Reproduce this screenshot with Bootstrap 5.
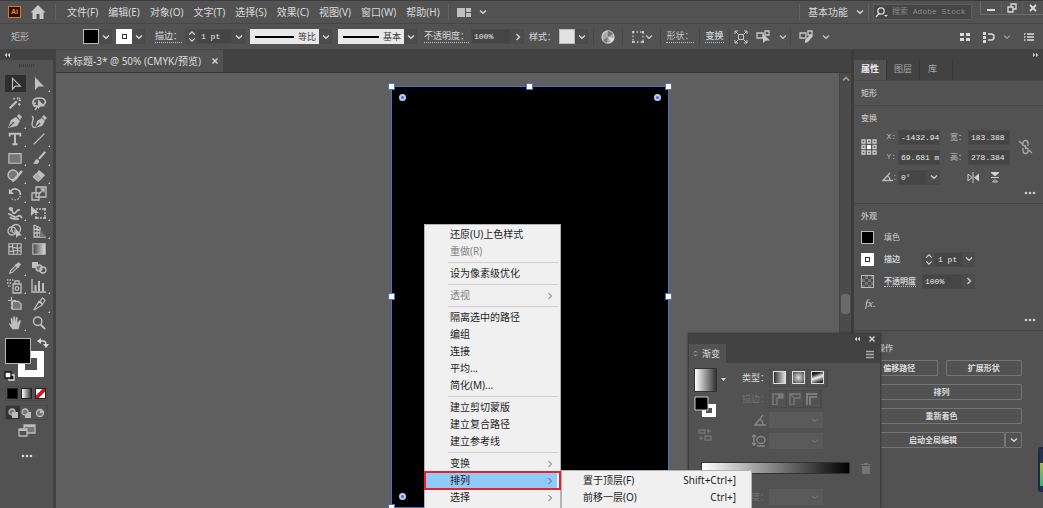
<!DOCTYPE html>
<html lang="zh-CN">
<head>
<meta charset="utf-8">
<meta name="viewport" content="width=device-width, initial-scale=1">
<title>未标题-3</title>
<link href="https://cdn.jsdelivr.net/npm/bootstrap@5.3.0/dist/css/bootstrap.min.css" rel="stylesheet">
<style>
:root{--panel:#525252;--dark:#424242;--field:#454545;--line:#474747;--ink:#dadada;--blue:#4f6fc4}
html,body{height:100%}
body{margin:0;background:var(--panel);color:var(--ink);font:10px/14px "Noto Sans","Noto Sans CJK SC",sans-serif;overflow:hidden}
button,input,select{font:inherit;color:inherit;border:0;padding:0;margin:0;background:transparent;border-radius:0}
a{color:inherit;text-decoration:none}
svg{display:block;fill:none;stroke:currentColor;stroke-width:1.3;flex:none}
.i8{width:8px;height:8px}.i12{width:12px;height:12px}.i14{width:14px;height:14px}.i16{width:16px;height:16px}.i18{width:18px;height:18px}
.solid{fill:currentColor;stroke:none}
.mono{font-family:"Liberation Mono","Noto Sans CJK SC",monospace;font-size:8px;line-height:12px}
/* application bar */
.appbar{height:24px;border-bottom:1px solid #464646;border-top:1px solid #3c3c3c}
.vline{width:1px;height:16px;background:#626262}
.brand{width:13px;height:12px;background:#2a1005;border:1px solid #d67a1c;color:#f08a1c;font:bold 7px/10px "Liberation Sans",sans-serif;text-align:center}
.menus{gap:10px;padding-left:3px}
.finder{width:99px;height:16px;background:var(--field);border:1px solid #5e5e5e}
.finder input{width:76px;color:#8a8a8a}
.finder input::placeholder{color:#8a8a8a;opacity:1}
.winbtns{width:63px;height:14px;border:1px solid #6a6a6a;border-top:0;border-right:0}
.winbtns button{flex:1;display:flex;justify-content:center;align-items:center}
.winbtns button+button{border-left:1px solid #5f5f5f}
/* control bar */
.ctrlbar{display:grid;grid-template-columns:83px 33px 39px 30px 65px 88px 86px 47px 58px 30px 34px 29px 38px 39px 30px 61px 1fr auto;height:26px;align-items:center;border-bottom:1px solid #464646;font-size:9px}
.ctrlbar>*{display:flex;align-items:center;min-width:0;white-space:nowrap}
.ctrlbar>.cut{border-left:1px solid #474747;height:18px;justify-content:center;color:#c6c6c6}
.under{border-bottom:1px dotted #bdbdbd;line-height:12px}
.chip{width:16px;height:15px;border:1px solid #bcbcbc;flex:none}
.chip.hole{background:#fff;border-color:#fff;display:flex;align-items:center;justify-content:center}
.chip.hole::after{content:"";width:5px;height:5px;border:1px solid #333}
.drop{width:13px;height:15px;border:1px solid #4a4a4a;display:flex;align-items:center;justify-content:center;background:#4c4c4c;flex:none}
.boxed{background:var(--field);border:1px solid #4a4a4a;height:15px;padding-left:2px;color:#e8e8e8}
.stroke-pick{height:15px;background:#e8e8e8;color:#3a3a3a;display:flex;align-items:center;gap:4px;padding:0 3px 0 5px;font-size:9px}
.stroke-pick::before{content:"";flex:1;height:2px;background:#000}
/* tool column */
.tools{width:53px;background:var(--panel)}
.strip{height:10px;background:var(--dark);display:flex;align-items:center;flex:none}
.grip{width:16px;height:3px;background:repeating-linear-gradient(90deg,#3c3c3c 0 1px,transparent 1px 2px)}
.toolgrid{display:grid;grid-template-columns:24px 24px;grid-template-rows:repeat(14,1fr);height:257px;margin:8px 0 0 3px}
.toolgrid button{display:flex;align-items:center;justify-content:center;position:relative;color:#c0c0c0}
.toolgrid .on{background:#2e2e2e;margin:0 1px 1px 2px;border-radius:1px}
.toolgrid .more::after{content:"";position:absolute;right:1px;bottom:1px;border:1px solid #c4c4c4;border-left-color:transparent;border-top-color:transparent}
.fillzone{height:45px;position:relative;margin-top:5px}
.sw-stroke{position:absolute;left:18px;top:14px;width:26px;height:26px;border:7px solid #fff;background:var(--panel)}
.sw-fill{position:absolute;left:5px;top:1px;width:26px;height:26px;background:#000;border:1px solid #b8b8b8}
.triple{display:grid;grid-template-columns:repeat(3,1fr);margin:0 5px;height:15px;border:1px solid #4a4a4a}
.triple>button{display:flex;align-items:center;justify-content:center;color:#bbb}
.mini{width:11px;height:11px;border:1px solid #222}
/* document */
.gutter{background:var(--dark)}
.tabstrip{height:23px;background:var(--dark);border-bottom:1px solid #383838}
.doctab{width:167px;background:var(--panel);padding:0 4px 0 7px}
.canvas{background:#5f5f5f;position:relative;overflow:hidden}
.art{position:absolute;left:335px;top:13px;width:278px;bottom:0;background:#000;border:1px solid var(--blue)}
.hnd{position:absolute;width:5px;height:5px;background:#fff;outline:1px solid var(--blue)}
.rnd{position:absolute;width:7px;height:7px;border:2px solid #b8ccff;border-radius:50%;background:#5470b8}
.vscroll{width:12px;background:#4b4b4b;position:relative;border-left:1px solid #444;padding-top:2px;color:#a8a8a8}
.thumb{position:absolute;left:1px;top:221px;width:9px;height:20px;border-radius:4px;background:#6b6b6b}
/* properties */
.props{width:189px;background:var(--panel);font-size:8px;line-height:12px;color:#cecece}
.ptabs{height:21px;background:var(--dark);border-bottom:1px solid #4a4a4a;font-size:9px}
.ptabs a{padding:3px 7px 0;border-right:1px solid #383838;color:#a8a8a8}
.ptabs a.active{background:var(--panel);color:#f0f0f0;font-weight:bold}
.ptabs a:last-child{padding-right:15px;padding-left:8px}
.sect{border-bottom:1px solid #454545;padding:0 7px;position:relative}
.sect h2{font-size:8px;line-height:12px;margin:0;font-weight:500;color:#c4c4c4}
.tgrid{display:grid;grid-template-columns:22px 15px 42px 28px 42px 1fr;grid-auto-rows:20px;align-items:center}
.tgrid label{text-align:right;padding-right:2px;color:#bbb;white-space:nowrap}
.flips{grid-column:4/7;padding-left:26px}
.arow{height:22px;display:grid;grid-template-columns:23px 38px 1fr;align-items:center}
.act{height:16px;border:1px solid #757575;border-radius:1px;flex:1;font-weight:bold;line-height:12px;color:#dcdcdc}
/* floating gradient panel */
.gpanel{position:absolute;left:688px;top:333px;width:193px;bottom:0;background:var(--panel);border:1px solid #3e3e3e;border-bottom:0;overflow:hidden;box-shadow:0 0 2px #333}
.grow{display:grid;grid-template-columns:75px 1fr;height:21px;align-items:center;margin-left:5px}
.grow>:first-child{justify-self:end;font-size:9px}
.grow svg{margin-right:3px}
.gset svg{margin:0}
.gfield{width:54px;height:16px;background:#5a5a5a;color:#6a6a6a;-webkit-appearance:none;appearance:none;background-image:url("data:image/svg+xml,%3Csvg xmlns='http://www.w3.org/2000/svg' viewBox='0 0 8 8'%3E%3Cpath d='M1 3l3 2 3-2' fill='none' stroke='%23777'/%3E%3C/svg%3E");background-size:8px;background-repeat:no-repeat;background-position:right 4px center;opacity:1}
.gset{display:flex;width:max-content;border:1px solid #494949}
.gset button{width:19px;height:16px;display:flex;align-items:center;justify-content:center;border-right:1px solid #494949}
.gset button:disabled{width:17px}
.gleft{position:absolute;left:5px;top:34px;width:32px}
.ramp{height:12px;width:149px;background:linear-gradient(90deg,#fff,#000);border:1px solid #333}
.gi{width:13px;height:13px;border:1px solid #ddd}
/* pop-up menus */
.pop{position:absolute;background:#f0f0f0;color:#1c1c1c;border:1px solid #b4b4b4;border-bottom:0;padding-top:1px}
.pop button{display:flex;justify-content:space-between;align-items:center;width:100%;height:17px;padding:0 6px 0 25px;line-height:17px}
.pop button:disabled{color:#858585}
.pop svg{stroke-width:1;color:#666}
.pop hr{margin:2px 2px 2px 23px;border:0;border-top:1px solid #d0d0d0;opacity:1}
.ctx{left:424px;top:224px;width:137px;height:300px}
.ctx .sel{background:linear-gradient(90deg,#91c9f7 132px,#f0f0f0 132px);outline:2px solid #e8202a;outline-offset:-1px;position:relative;z-index:2}
.sub{left:561px;top:470px;width:191px;height:60px}
.sub button{padding:0 15px 0 21px}
.meter{position:absolute;right:0;top:447px;width:5px;height:45px;background:linear-gradient(#26324a 35%,#a8b84a 35%,#46a888 90%,#26324a 90%);border:1px solid #1f2a48;border-width:2px 0 2px 2px;border-radius:3px 0 0 3px}
</style>
</head>
<body class="position-relative">
<svg class="d-none">
<symbol id="chev" viewBox="0 0 8 8"><path d="M1 2.5 4 5.3 7 2.5"/></symbol>
<symbol id="next" viewBox="0 0 8 8"><path d="M2.5 1 5.5 4 2.5 7"/></symbol>
<symbol id="updn" viewBox="0 0 10 14"><path d="M2 5 5 2 8 5M2 9 5 12 8 9"/></symbol>
<symbol id="dbl" viewBox="0 0 8 8"><path d="M4 1 1 4 4 7zM8 1 5 4 8 7z" class="solid"/></symbol>
<symbol id="x" viewBox="0 0 8 8"><path d="M1.5 1.5l5 5M6.5 1.5l-5 5"/></symbol>
<symbol id="dots" viewBox="0 0 12 4"><g class="solid"><circle cx="2" cy="2" r="1.3"/><circle cx="6" cy="2" r="1.3"/><circle cx="10" cy="2" r="1.3"/></g></symbol>
<symbol id="list" viewBox="0 0 12 12"><path d="M4 3h7M4 6h7M4 9h7M1 3h1.5M1 6h1.5M1 9h1.5"/></symbol>
</svg>

<div class="d-flex flex-column h-100">
<header class="appbar d-flex align-items-center flex-shrink-0">
 <div class="brand ms-2 me-2">Ai</div>
 <svg class="i18 solid me-2" viewBox="0 0 18 18"><path d="M9 2 1.5 9.5h2V16h4v-5h3v5h4V9.500h2z" fill="#c8c8c8"/></svg>
 <i class="vline me-2"></i>
 <nav class="menus d-flex text-nowrap" aria-label="主菜单">
  <a href="#">文件(F)</a><a href="#">编辑(E)</a><a href="#">对象(O)</a><a href="#">文字(T)</a><a href="#">选择(S)</a><a href="#">效果(C)</a><a href="#">视图(V)</a><a href="#">窗口(W)</a><a href="#">帮助(H)</a>
 </nav>
 <i class="vline mx-2"></i>
 <button class="d-flex align-items-center gap-2" aria-label="排列文档"><svg class="i14 solid" viewBox="0 0 14 14"><path fill="#c0c0c0" d="M0 3h8v9H0zM9 3h5v4H9zM9 8h5v4H9z"/></svg><svg class="i8"><use href="#chev"/></svg></button>
 <i class="vline ms-auto me-2"></i>
 <button class="d-flex align-items-center gap-2 me-1">基本功能 <svg class="i8"><use href="#chev"/></svg></button>
 <i class="vline me-1"></i>
 <div class="finder d-flex align-items-center gap-1 me-2"><svg class="i14" viewBox="0 0 14 14"><circle cx="7" cy="6" r="3.200"/><path d="M5 8.500 2 12"/><path d="M10 10h4l-2 2z" class="solid"/></svg><input class="mono" aria-label="搜索" placeholder="搜索 Adobe Stock"></div>
 <div class="winbtns d-flex align-self-start">
  <button aria-label="最小化"><svg class="i12" viewBox="0 0 12 12"><path d="M2 8h8" stroke-width="2"/></svg></button>
  <button aria-label="还原"><svg class="i12" viewBox="0 0 12 12"><path d="M2 5h5v5H2zM5 5V2h5v5H7"/></svg></button>
  <button aria-label="关闭"><svg class="i12" viewBox="0 0 12 12"><path d="M3 3l6 6M9 3 3 9" stroke-width="1.800"/></svg></button>
 </div>
</header>

<div class="ctrlbar flex-shrink-0">
 <span style="padding-left:11px;color:#bbb">矩形</span>
 <div><button class="chip bg-black" aria-label="填色"></button><button class="drop" aria-label="填色选项"><svg class="i8"><use href="#chev"/></svg></button></div>
 <div><button class="chip hole" aria-label="描边颜色"></button><button class="drop" aria-label="描边选项"><svg class="i8"><use href="#chev"/></svg></button></div>
 <label for="sw"><span class="under">描边：</span></label>
 <div><button class="drop" aria-label="微调"><svg width="10" height="13"><use href="#updn"/></svg></button><input id="sw" class="boxed mono" size="1" style="width:34px" value="1 pt"><button class="drop" aria-label="粗细"><svg class="i8"><use href="#chev"/></svg></button></div>
 <div><button class="stroke-pick" style="width:69px">等比</button><button class="drop" aria-label="变量宽度"><svg class="i8"><use href="#chev"/></svg></button></div>
 <div><button class="stroke-pick" style="width:66px">基本</button><button class="drop" aria-label="画笔"><svg class="i8"><use href="#chev"/></svg></button></div>
 <label for="op"><span class="under">不透明度：</span></label>
 <div><input id="op" class="boxed mono" style="width:40px" value="100%"><button class="drop" aria-label="不透明度选项"><svg class="i8"><use href="#next"/></svg></button></div>
 <span>样式：</span>
 <div><button class="chip" style="background:#e2e2e2" aria-label="图形样式"></button><button class="drop" aria-label="样式选项"><svg class="i8"><use href="#chev"/></svg></button></div>
 <button class="cut" aria-label="重新着色"><svg class="i14" viewBox="0 0 14 14"><circle cx="7" cy="7" r="6" fill="#aaa" stroke="#ccc"/><path d="M7 7V1a6 6 0 0 1 5 3zM7 7 2 10a6 6 0 0 0 4 3z" fill="#777" stroke="none"/><path d="M7 7 13 8a6 6 0 0 1-3 4z" fill="#ddd" stroke="none"/></svg></button>
 <button class="cut" aria-label="对齐"><svg class="i14" viewBox="0 0 14 14"><path d="M2 2h10v10H2z" stroke-dasharray="1.500 2"/><path d="M1 1h2v2H1zM11 1h2v2h-2zM1 11h2v2H1zM11 11h2v2h-2z" class="solid"/></svg><svg class="i8"><use href="#chev"/></svg></button>
 <a class="cut" href="#"><span class="under">形状：</span></a>
 <a class="cut" href="#"><span class="under fw-bold">变换</span></a>
 <div class="cut gap-2"><svg class="i14" viewBox="0 0 14 14"><path d="M4.500 4.500h5v5h-5zM1 1l3 3M13 1l-3 3M1 13l3-3M13 13l-3-3M1 4V1h3M10 1h3v3M1 10v3h3M10 13h3v-3" stroke-width="1"/></svg><svg width="15" height="14" viewBox="0 0 15 14"><path d="M1 3h6v5H1zM9 1h4v4H9z"/><path d="M7 4v9l3-2.500h4z" class="solid"/></svg><svg class="i8"><use href="#chev"/></svg></div>
 <div class="cut gap-2 justify-content-start ps-2"><svg width="15" height="14" viewBox="0 0 15 14"><path d="M1 3h6v5H1zM9 1h4v4H9z"/><path d="M12 4 6 10v3l3-1 5-6z" class="solid"/></svg><svg class="i8"><use href="#chev"/></svg></div>
 <div class="gap-2 me-2"><svg class="i12 solid" viewBox="0 0 12 12"><path d="M1 2h4v3H1zM7 2h4v3H7zM1 7h4v3H1zM7 7h4v3H7z"/></svg><svg class="i12 ms-1" viewBox="0 0 12 12"><path d="M0 1h3v3H0zM0 5h3v3H0zM0 9h3v3H0z" class="solid"/><path d="M5 3h3a3 3 0 0 1 0 6H5" stroke-width="1.500"/></svg><svg class="i8 opacity-50"><use href="#chev"/></svg><svg class="i12 ms-1"><use href="#list"/></svg></div>
</div>

<main class="d-flex flex-grow-1" style="min-height:0">
 <aside class="tools d-flex flex-column flex-shrink-0">
  <div class="strip ps-1"><svg width="6" height="6"><use href="#dbl"/></svg></div>
  <div class="grip mx-auto mt-1 mb-0"></div>
  <div class="toolgrid">
   <button class="on" aria-label="选择"><svg class="i14" viewBox="0 0 16 16"><path d="M4 1.500v12.500l3.200-3.500h5.800z"/></svg></button>
   <button class="more" aria-label="直接选择"><svg class="i16 solid" viewBox="0 0 16 16"><path d="M4 1v13l3.500-3.500h5.500z"/></svg></button>
   <button aria-label="魔棒"><svg class="i14" viewBox="0 0 16 16"><path d="M2 14 10 6" stroke-width="2.400"/><path d="M11 1v3M15 5h-3M14 2l-1.500 1.500M7 2v2M6 3h2M13 8v3M11.500 9.500h3"/></svg></button>
   <button aria-label="套索"><svg class="i16" viewBox="0 0 16 16"><path d="M5 11C0 10 1 3 8 3s8 5 4 7M5 8c-3 0-3 4 0 3s0 3-1 4" stroke-width="1.600"/><path d="M7 4v10l2.500-2.500H14z" class="solid"/></svg></button>
   <button class="more" aria-label="钢笔"><svg class="i16" viewBox="0 0 16 16"><path d="M1 15 4 7l5-3 4 4-3 5zM10 3l2-2 3 3-2 3z" class="solid"/><path d="M2 14l5-5" stroke="#525252"/></svg></button>
   <button aria-label="曲率"><svg class="i16" viewBox="0 0 16 16"><path d="M4 15 6 8l5-3 3 3-3 5zM11 4l2-2 3 3-2 2z" class="solid"/><path d="M1 3c3 2 0 5 0 8s2 4 4 3"/><path d="M5 14l4-4" stroke="#525252"/></svg></button>
   <button class="more" aria-label="文字"><svg class="i14" viewBox="0 0 16 16"><path d="M2 5V2h12v3M8 2v12M5 14h6" stroke-width="2.200"/></svg></button>
   <button class="more" aria-label="直线"><svg class="i14" viewBox="0 0 16 16"><path d="M2 14 14 2"/></svg></button>
   <button class="more" aria-label="矩形"><svg class="i14" viewBox="0 0 16 16"><path d="M1 3h14v11H1z" fill="#777"/></svg></button>
   <button class="more" aria-label="画笔"><svg class="i14" viewBox="0 0 16 16"><path d="M6 9c-3 0-2 4-5 5 4 2 8 0 7-3z" class="solid"/><path d="M15 1 8 9" stroke-width="2.600"/></svg></button>
   <button class="more" aria-label="斑点画笔"><svg class="i16" viewBox="0 0 16 16"><circle cx="6" cy="7" r="5" fill="#777"/><path d="M15 3 7 12l-2 1" stroke-width="2.600"/></svg></button>
   <button class="more" aria-label="橡皮擦"><svg class="i14" viewBox="0 0 16 16"><path d="M8 1 15 7l-4 4-6-6z" class="solid"/><path d="M5 5 1.500 9 7 14l4-3.500" fill="#aaa"/></svg></button>
   <button class="more" aria-label="旋转"><svg class="i14" viewBox="0 0 16 16"><path d="M3 5a6 6 0 0 1 11 4" stroke-width="1.800"/><path d="M14 10a6 6 0 0 1-11 2" stroke-dasharray="2 1.500"/><path d="M1 2v6h6z" class="solid"/></svg></button>
   <button class="more" aria-label="缩放"><svg class="i16" viewBox="0 0 16 16"><path d="M5 1h10v10H5zM1 7h7v7H1zM8 8l5-5M9.500 3H13v3.500"/></svg></button>
   <button class="more" aria-label="宽度"><svg class="i16" viewBox="0 0 16 16"><path d="M2 4c3-3 3 6 6 4s2-4 5-3M1 9c3-1 5 4 8 3s3-3 6 1M3 12c2 3 6 2 9 2" stroke-width="1.700"/><circle cx="4" cy="4" r="2" class="solid"/></svg></button>
   <button class="more" aria-label="自由变换"><svg class="i16" viewBox="0 0 16 16"><path d="M5 4h9v9H5z" stroke-dasharray="2 1"/><path d="M0 1v10l3-3h5z" class="solid"/><path d="M13 3h2v2h-2zM13 12h2v2h-2zM4 12h2v2H4z" class="solid"/></svg></button>
   <button class="more" aria-label="形状生成器"><svg class="i16" viewBox="0 0 16 16"><circle cx="5" cy="8" r="4"/><circle cx="9" cy="6" r="4.500"/><path d="M3 8h7" stroke-dasharray="1 1"/><path d="M9 6v9l2.500-2.500H15z" class="solid"/></svg></button>
   <button class="more" aria-label="透视网格"><svg class="i16" viewBox="0 0 16 16"><path d="M3 2v12h12M3 2l6 3v9M3 6l6 1M3 10l6 0M6 3.500V14"/><path d="M9 7l6 7H9z" fill="#777" stroke="none"/></svg></button>
   <button aria-label="网格"><svg class="i14" viewBox="0 0 16 16"><path d="M1 2h14v12H1zM1 6c5-3 8 4 14 0M1 10c5 3 8-3 14 1M6 2c-3 4 2 8 0 12M11 2c-2 4 2 8-1 12"/></svg></button>
   <button aria-label="渐变"><svg class="i14" viewBox="0 0 16 16"><defs><linearGradient id="g1"><stop stop-color="#444"/><stop offset="1" stop-color="#ddd"/></linearGradient></defs><path d="M1 2h14v12H1z" fill="url(#g1)"/></svg></button>
   <button class="more" aria-label="吸管"><svg class="i14" viewBox="0 0 16 16"><path d="M2 14l1-3 6-6 2 2-6 6z"/><path d="M8 4l4 4 1-2 2-2-3-3-2 2z" class="solid"/></svg></button>
   <button aria-label="混合"><svg class="i16" viewBox="0 0 16 16"><path d="M1 2h6v6H1z" class="solid"/><circle cx="8" cy="8" r="3" fill="#777"/><circle cx="12" cy="10" r="3"/></svg></button>
   <button class="more" aria-label="符号喷枪"><svg class="i16" viewBox="0 0 16 16"><path d="M6 6h8v9H6zM8 6V3h4v3"/><circle cx="10" cy="10.500" r="1.800"/><path d="M0 2h7M0 5h5M1 8h3" stroke-dasharray="1.500 1"/></svg></button>
   <button class="more" aria-label="图表"><svg class="i16" viewBox="0 0 16 16"><path d="M1 1v13h14"/><path d="M4.500 13V7M8 13V3M12 13V5" stroke-width="2"/></svg></button>
   <button aria-label="画板"><svg class="i14" viewBox="0 0 16 16"><path d="M4 0v14M0 4h10" stroke-dasharray="4 1"/><path d="M5 5h7l3 3v6H5z" fill="#777"/></svg></button>
   <button class="more" aria-label="切片"><svg class="i14" viewBox="0 0 16 16"><path d="M2 15 8 5l4 4zM9 5l3-4 3 3-3 4z"/></svg></button>
   <button class="more" aria-label="抓手"><svg class="i14" viewBox="0 0 16 16"><path d="M5 15 1 9c0-1 1-1 2 0l1 1-1-7c0-1 2-1 2 0l1 4V1c0-1 2-1 2 0v6l1-5c0-1 2-1 2 0l-.500 6L13 5c1-1 2 0 1.500 1L12 15z" class="solid"/></svg></button>
   <button aria-label="缩放视图"><svg class="i14" viewBox="0 0 16 16"><circle cx="6.500" cy="6" r="4.800" stroke-width="1.600"/><path d="M10 10l5 5" stroke-width="2.200"/></svg></button>
  </div>
  <div class="fillzone flex-shrink-0">
   <button class="sw-stroke" aria-label="描边"></button><button class="sw-fill" aria-label="填色"></button>
   <svg class="i12 position-absolute end-0 top-0 me-1" viewBox="0 0 12 12"><path d="M3 4h3q3 0 3 4"/><path d="M4 1v6L0 4zM6 7h6l-3 4z" class="solid"/></svg>
   <svg class="i12 position-absolute bottom-0 start-0 ms-1" viewBox="0 0 12 12"><path d="M5 5h5v5H5z" fill="#111" stroke="#ddd"/><path d="M1 2h6v6H1z" fill="#fff" stroke="#111"/></svg>
  </div>
  <div class="triple mt-1"><button aria-label="颜色"><i class="mini bg-black"></i></button><button aria-label="渐变"><i class="mini" style="background:linear-gradient(90deg,#fff,#333)"></i></button><button aria-label="无"><i class="mini" style="background:linear-gradient(-45deg,#fff 0 40%,#fff 40%,#fff 100%),#fff;background:linear-gradient(135deg,#fff 38%,#e01020 38% 62%,#fff 62%)"></i></button></div>
  <div class="triple mt-1"><button style="background:#333" aria-label="正常绘图"><svg class="i12" viewBox="0 0 12 12"><circle cx="5" cy="5" r="3"  fill="#777"/><path d="M5 5h6v6H5z" class="solid"/></svg></button><button aria-label="背面绘图"><svg class="i12" viewBox="0 0 12 12"><path d="M5 5h6v6H5z" class="solid"/><circle cx="5" cy="5" r="3" fill="#777"/></svg></button><button aria-label="内部绘图"><svg class="i12" viewBox="0 0 12 12"><circle cx="6" cy="6" r="3.500" fill="#777"/><path d="M6 6V3a3 3 0 0 1 3 3z" class="solid"/></svg></button></div>
  <button class="mx-auto mt-1" style="color:#bbb" aria-label="屏幕模式"><svg width="18" height="14" viewBox="0 0 18 14"><path d="M6 1h11v8H6z" fill="#777"/><path d="M1 5h8v7H1z" fill="#525252"/><path d="M6 2h11M1 6h8" stroke-width="2"/></svg></button>
  <button class="mx-auto mt-3" aria-label="更多"><svg width="12" height="4"><use href="#dots"/></svg></button>
 </aside>
 <i class="gutter" style="width:3px"></i>

 <section class="d-flex flex-column flex-grow-1" style="min-width:0">
  <div class="tabstrip d-flex flex-shrink-0"><div class="doctab d-flex align-items-center justify-content-between"><span>未标题-3* @ 50% (CMYK/预览)</span><button aria-label="关闭"><svg class="i8" stroke-width="2"><use href="#x"/></svg></button></div></div>
  <div class="d-flex flex-grow-1">
   <div class="canvas flex-grow-1">
    <div class="art">
     <i class="hnd" style="left:-3px;top:-3px"></i><i class="hnd" style="left:135px;top:-3px"></i><i class="hnd" style="right:-3px;top:-3px"></i>
     <i class="hnd" style="left:-3px;top:207px"></i><i class="hnd" style="right:-3px;top:207px"></i>
     <i class="hnd" style="left:-3px;bottom:-3px"></i><i class="hnd" style="right:-3px;bottom:-3px"></i>
     <i class="rnd" style="left:7px;top:7px"></i><i class="rnd" style="right:7px;top:7px"></i><i class="rnd" style="left:7px;bottom:7px"></i>
    </div>
   </div>
   <div class="vscroll"><svg class="i8 mx-auto"><path d="M1 5.500 4 2.500 7 5.500"/></svg><i class="thumb"></i></div>
  </div>
 </section>
 <i class="gutter" style="width:3px;background:#3c3c3c"></i>

 <aside class="props flex-shrink-0">
  <div class="strip justify-content-end pe-1"><svg width="6" height="6" style="transform:rotate(180deg)"><use href="#dbl"/></svg></div>
  <nav class="ptabs d-flex"><a class="active" href="#">属性</a><a href="#">图层</a><a href="#">库</a></nav>
  <div class="sect" style="height:25px;padding-top:6px"><h2>矩形</h2></div>
  <div class="sect" style="height:98px;padding-top:6px">
   <h2>变换</h2>
   <div class="tgrid" style="margin-top:3px">
    <svg width="16" height="16" viewBox="0 0 16 16" style="grid-row:1/3" stroke-width="1"><path d="M1 1h3v3H1zM6.500 1h3v3h-3zM12 1h3v3h-3zM1 6.500h3v3H1zM12 6.500h3v3h-3zM1 12h3v3H1zM6.500 12h3v3h-3zM12 12h3v3h-3z"/><path d="M6 6h4v4H6z" fill="#fff" stroke="none"/></svg>
    <label for="px" class="mono">X:</label><input id="px" class="boxed mono w-100" value="-1432.94"><label for="pw">宽：</label><input id="pw" class="boxed mono w-100" value="183.388">
    <svg class="i16 ms-2" viewBox="0 0 16 16" style="grid-row:1/3;grid-column:6;color:#aaa"><path d="M5 7V4a2.500 2.500 0 0 1 5 0v3M5 9v3a2.500 2.500 0 0 0 5 0V9M7.500 6v4M1 2l13 12"/></svg>
    <label for="py" class="mono" style="grid-column:2">Y:</label><input id="py" class="boxed mono w-100" value="69.681 m"><label for="ph">高：</label><input id="ph" class="boxed mono w-100" value="278.384">
    <label for="pa" style="grid-column:2" class="d-flex justify-content-end" aria-label="角度"><svg class="i12" viewBox="0 0 12 12"><path d="M11 9.500H1L8 2M5 5q3 1 3 4"/></svg>:</label><div class="d-flex"><input id="pa" class="boxed mono" style="width:29px" value="0°"><button class="drop" aria-label="角度选项"><svg class="i8"><use href="#chev"/></svg></button></div>
    <div class="flips d-flex gap-2"><svg class="i14" viewBox="0 0 14 14"><path d="M2 4v7l4-3.500zM7 2v11" stroke-width="1"/><path d="M13 3.500v8L8 7.500z" class="solid"/></svg><svg class="i14" viewBox="0 0 14 14"><path d="M3 7.500h8M4.500 12h5L7 9.500z" stroke-width="1"/><path d="M3 2h8v1L7 6.500 3 3z" class="solid"/></svg></div>
   </div>
   <svg width="12" height="4" class="ms-auto mt-1"><use href="#dots"/></svg>
  </div>
  <div class="sect" style="height:127px;padding-top:6px">
   <h2>外观</h2>
   <div style="margin-top:4px">
    <div class="arow"><i class="chip bg-black" style="width:13px;height:13px"></i><a href="#">填色</a></div>
    <div class="arow"><i class="chip hole" style="width:13px;height:13px"></i><label for="ps" class="fw-bold">描边</label><div class="d-flex"><button class="drop" aria-label="微调"><svg width="10" height="13"><use href="#updn"/></svg></button><input id="ps" class="boxed mono" style="width:27px" value="1 pt"><button class="drop" aria-label="粗细"><svg class="i8"><use href="#chev"/></svg></button></div></div>
    <div class="arow"><i class="chip" style="width:13px;height:13px;background:repeating-conic-gradient(#777 0 25%,#4a4a4a 0 50%) 0 0/6px 6px"></i><label for="po" class="text-nowrap"><span class="under fw-bold">不透明度</span></label><div class="d-flex"><input id="po" class="boxed mono" style="width:40px" value="100%"><button class="drop" aria-label="不透明度选项"><svg class="i8"><use href="#next"/></svg></button></div></div>
    <div class="arow"><button class="ps-1 text-start" style="font:italic 11px 'Liberation Serif',serif">fx.</button></div>
   </div>
   <svg width="12" height="4" class="ms-auto mt-1"><use href="#dots"/></svg>
  </div>
  <div class="sect border-0" style="padding:11px 21px 0 7px">
   <h2>快速操作</h2>
   <div class="d-flex flex-column gap-2" style="margin-top:6px">
    <div class="d-flex gap-2"><button class="act">偏移路径</button><button class="act">扩展形状</button></div>
    <div class="d-flex"><button class="act">排列</button></div>
    <div class="d-flex"><button class="act">重新着色</button></div>
    <div class="d-flex"><button class="act">启动全局编辑</button><button class="act d-flex align-items-center justify-content-center" style="flex:0 0 17px" aria-label="更多选项"><svg class="i8"><use href="#chev"/></svg></button></div>
   </div>
  </div>
 </aside>
</main>
</div>

<section class="gpanel" aria-label="渐变">
 <div class="strip justify-content-end gap-2 pe-1"><svg width="6" height="6"><use href="#dbl"/></svg><svg width="8" height="8"><use href="#x"/></svg></div>
 <div class="d-flex" style="height:19px;background:var(--dark)"><div class="d-flex align-items-center px-1 gap-1" style="width:37px;background:var(--panel);white-space:nowrap;font-size:9px"><svg width="5" height="9" viewBox="0 0 10 14" stroke-width="2"><use href="#updn"/></svg>渐变</div><svg class="i12 ms-auto me-1 align-self-center" viewBox="0 0 12 12" stroke-width="1" style="color:#aaa"><path d="M2 3.500h8M2 6.500h8M2 9.500h8"/></svg></div>
 <div class="gleft">
  <div class="d-flex align-items-center gap-1"><i style="width:24px;height:24px;background:linear-gradient(90deg,#fff,#333);border:1px solid #333"></i><svg width="5" height="4" class="solid"><path d="M0 0h5L2.500 3z"/></svg></div>
  <svg width="24" height="24" class="mt-1"><path d="M10 10h10v9H10z" stroke="#fff" stroke-width="4"/><path d="M1 1h13v13H1z" fill="#000" stroke="#ccc" stroke-width="1"/></svg>
  <svg width="14" height="14" class="ms-1 mt-2 opacity-25" viewBox="0 0 14 14"><path d="M1 2h6v3H1zM9 3h4M1 10h4M7 8h6v4H7zM3 8v4M10 1v4"/></svg>
 </div>
 <div class="grow" style="margin-top:4px"><span>类型：</span><div class="gset"><button aria-label="线性"><i class="gi" style="background:linear-gradient(90deg,#333,#ddd)"></i></button><button aria-label="径向"><i class="gi" style="background:radial-gradient(#ddd,#444)"></i></button><button aria-label="任意形状"><i class="gi" style="background:linear-gradient(160deg,#222 20%,#eee 50%,#333 85%)"></i></button></div></div>
 <div class="grow"><span style="color:#707070">描边：</span><div class="gset" style="color:#7a7a7a"><button disabled aria-label="描边中"><svg class="i12" viewBox="0 0 12 12"><path d="M1 1h10v4H5v7H1z"/><path d="M6 1h5v4H6z" class="solid"/></svg></button><button disabled aria-label="沿描边"><svg class="i12" viewBox="0 0 12 12"><path d="M1 1h10v4H5v7H1zM1 1l4 4"/></svg></button><button disabled aria-label="跨描边"><svg class="i12" viewBox="0 0 12 12"><path d="M1 12V1h10M4 12V4h7" stroke-width="2"/></svg></button></div></div>
 <div class="grow"><span style="color:#888"><svg class="i12" viewBox="0 0 12 12"><path d="M12 11H1L9 1M6 5q3 2 3 6"/></svg></span><select class="gfield" disabled aria-label="角度"><option></option></select></div>
 <div class="grow"><span style="color:#888"><svg class="i14" viewBox="0 0 14 14"><ellipse cx="9" cy="6" rx="4" ry="3.500"/><path d="M2 1v10M0 3l2-2 2 2M0 9l2 2 2-2M5 12h8"/></svg></span><select class="gfield" disabled aria-label="长宽比"><option></option></select></div>
 <div class="d-flex align-items-center justify-content-between" style="height:34px;padding:0 8px 0 12px"><div class="ramp"></div><svg class="i12 solid opacity-25" viewBox="0 0 12 12"><path d="M1 2h3V1h4v1h3v1H1zM2 4h8v8H2z"/></svg></div>
 <div class="grow" style="height:24px"><span style="color:#707070">度：</span><select class="gfield" disabled aria-label="不透明度"><option></option></select></div>
</section>
<i class="meter"></i>

<div class="pop ctx" role="menu">
 <button>还原(U)上色样式</button><button disabled>重做(R)</button><hr>
 <button>设为像素级优化</button><hr>
 <button disabled>透视<svg class="i8"><use href="#next"/></svg></button><hr>
 <button>隔离选中的路径</button><button>编组</button><button>连接</button><button>平均...</button><button>简化(M)...</button><hr>
 <button>建立剪切蒙版</button><button>建立复合路径</button><button>建立参考线</button><hr>
 <button>变换<svg class="i8"><use href="#next"/></svg></button>
 <button class="sel">排列<svg class="i8"><use href="#next"/></svg></button>
 <button>选择<svg class="i8"><use href="#next"/></svg></button>
</div>
<div class="pop sub" role="menu">
 <button><span>置于顶层(F)</span><span>Shift+Ctrl+]</span></button>
 <button><span>前移一层(O)</span><span>Ctrl+]</span></button>
</div>
<script src="https://cdn.jsdelivr.net/npm/bootstrap@5.3.0/dist/js/bootstrap.bundle.min.js"></script>
</body>
</html>
